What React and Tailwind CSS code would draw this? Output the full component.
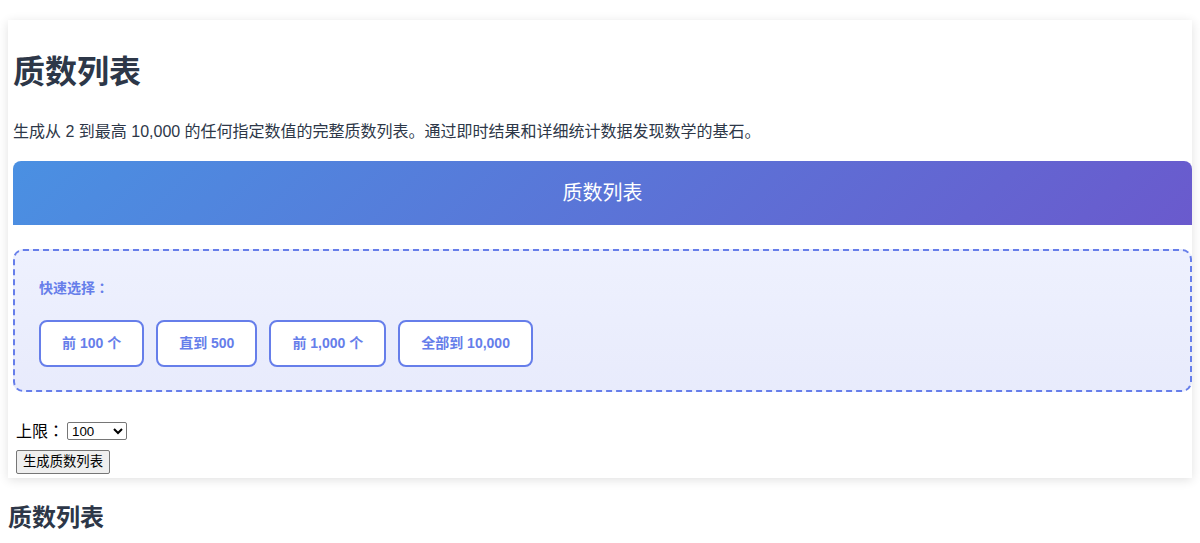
import React from "react";

export default function App() {
  const font = { fontFamily: '"Liberation Sans", "Noto Sans CJK SC", sans-serif' };
  const colon = { fontFamily: '"Noto Sans CJK TC", sans-serif' };
  return (
    <div className="bg-white min-h-[543px] text-[#2d3748]" style={font}>
      <div className="mx-2 pt-5">
        <div className="bg-white shadow-[0_2px_10px_rgba(0,0,0,0.12)] pl-[5px] pb-[4px] pt-[34px]">
          <h1 className="text-[32px] leading-[37px] font-bold text-[#2d3748]">质数列表</h1>
          <p className="mt-[29px] text-[16px] leading-[24px] text-[#2d3748]">
            生成从 2 到最高 10,000 的任何指定数值的完整质数列表。通过即时结果和详细统计数据发现数学的基石。
          </p>
          <div className="mt-[17px] h-[64px] rounded-t-[8px] bg-[linear-gradient(135deg,#4a90e2_0%,#6a5acd_100%)] flex items-center justify-center text-white text-[20px]">
            质数列表
          </div>
          <div className="mt-[24px] border-2 border-dashed border-[#667eea] rounded-[10px] bg-gradient-to-b from-[#eef1fe] to-[#e8ebfc] px-6 pt-[24px] pb-[23px]">
            <div className="text-[14px] leading-[24px] font-bold text-[#667eea]">
              快速选择<span style={colon}>：</span>
            </div>
            <div className="mt-[20px] flex gap-3">
              {["前 100 个", "直到 500", "前 1,000 个", "全部到 10,000"].map((t) => (
                <button
                  key={t}
                  className="h-[47px] px-[21px] bg-white border-2 border-[#667eea] rounded-[8px] text-[14px] font-bold text-[#667eea]"
                >
                  {t}
                </button>
              ))}
            </div>
          </div>
          <div className="mt-[29px] ml-[3px] text-black">
            <div className="flex items-center h-[19px] text-[16px]">
              <span>
                上限<span style={colon}>：</span>
              </span>
              <select className="ml-[3px] w-[60px] h-[18px] border border-[#767676] rounded-[2px] text-[13.33px] bg-white">
                <option>100</option>
                <option>500</option>
                <option>1000</option>
                <option>10000</option>
              </select>
            </div>
            <button className="mt-[10px] h-[24px] px-[6px] bg-[#efefef] border border-[#767676] rounded-[2px] text-[13.33px] leading-none">
              生成质数列表
            </button>
          </div>
        </div>
        <h2 className="mt-[26px] text-[24px] leading-[28px] font-bold text-[#2d3748]">质数列表</h2>
      </div>
    </div>
  );
}
